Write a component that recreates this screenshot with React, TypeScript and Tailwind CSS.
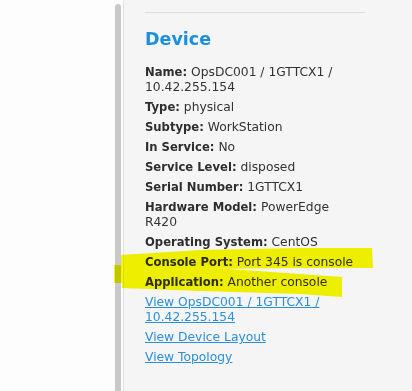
import React from 'react';

const rows: { label: string; value: string }[] = [
  { label: 'Name', value: 'OpsDC001 / 1GTTCX1 / 10.42.255.154' },
  { label: 'Type', value: 'physical' },
  { label: 'Subtype', value: 'WorkStation' },
  { label: 'In Service', value: 'No' },
  { label: 'Service Level', value: 'disposed' },
  { label: 'Serial Number', value: '1GTTCX1' },
  { label: 'Hardware Model', value: 'PowerEdge R420' },
  { label: 'Operating System', value: 'CentOS' },
  { label: 'Console Port', value: 'Port 345 is console' },
  { label: 'Application', value: 'Another console' },
];

const links = ['View OpsDC001 / 1GTTCX1 / 10.42.255.154', 'View Device Layout', 'View Topology'];

function Highlights() {
  return (
    <svg
      className="pointer-events-none absolute left-0 top-0 mix-blend-multiply"
      width="412"
      height="391"
      viewBox="0 0 412 391"
    >
      <path
        fill="#f8f800"
        d="M121 255 L200 250 L300 248 L372 248 L373 268 L300 268 L200 269 L121 271 Z M114 265 L200 267 L300 274 L342 277 L342 297 L300 294 L200 291 L122 288 L122 283 L114 283 Z"
      />
    </svg>
  );
}

export default function App() {
  return (
    <div className="relative flex h-[391px] w-[412px] overflow-hidden bg-[#fdfdfd] font-['DejaVu_Sans',sans-serif]">
      <div className="w-[115px] shrink-0" />
      <div className="mt-1 w-[6px] shrink-0 rounded-t-[3px] bg-[#c9c9c9]" />
      <div className="ml-[2px] flex-1 border-l border-[#e2e2e2] bg-[#f5f5f5] pl-[21px] pt-3">
        <div className="w-[220px] border-t border-[#dddddd]" />
        <h2 className="mt-[14px] text-[17.5px] font-bold leading-6 text-[#1b8fde]">Device</h2>
        <div className="mt-[14px] flex w-[212px] flex-col gap-[5px] text-[12.3px] leading-[15px] text-[#333333]">
          {rows.map((r) => (
            <div key={r.label}>
              <span className="text-[11.6px] font-bold text-[#2e2e2e]">{r.label}:</span> {r.value}
            </div>
          ))}
          {links.map((l) => (
            <a key={l} href="#" className="text-[#2b8fdb] underline">
              {l}
            </a>
          ))}
        </div>
      </div>
      <Highlights />
    </div>
  );
}
